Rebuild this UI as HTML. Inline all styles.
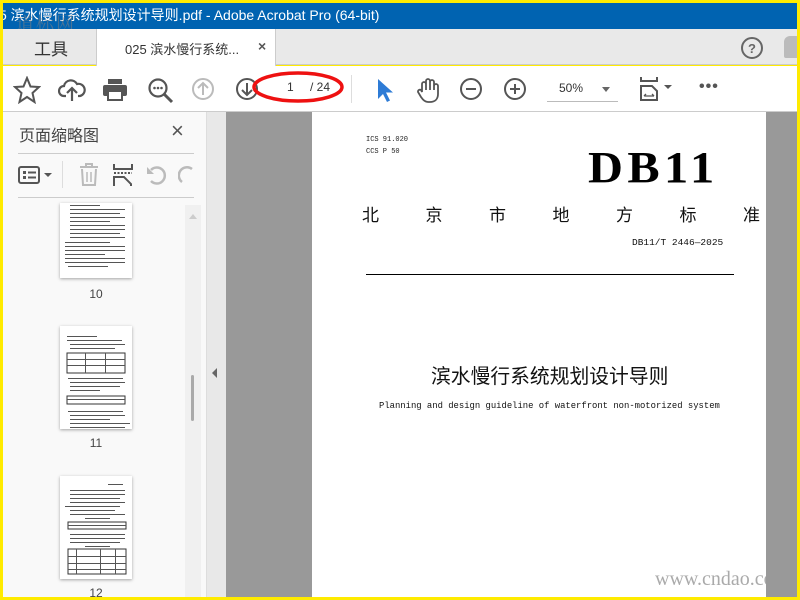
<!DOCTYPE html>
<html><head><meta charset="utf-8">
<style>
*{margin:0;padding:0;box-sizing:border-box}
body{width:800px;height:600px;overflow:hidden;background:#ffeb00;position:relative;font-family:"Liberation Sans","Noto Sans CJK SC",sans-serif}
.a{position:absolute}
.thumb{position:absolute;left:60px;width:72px;background:#fff;box-shadow:0 1px 3px rgba(0,0,0,.35)}
.lbl{position:absolute;left:60px;width:72px;text-align:center;font-size:12px;color:#444}
.ic{position:absolute}
</style></head><body>
<div class="a" style="left:3px;top:3px;width:794px;height:26px;background:#0063b1;color:#fff;font-size:14px;line-height:24px;white-space:nowrap;overflow:hidden">
<span style="margin-left:-4px">5 滨水慢行系统规划设计导则.pdf - Adobe Acrobat Pro (64-bit)</span></div>
<div class="a" style="left:16px;top:10px;font-size:18px;color:rgba(130,130,130,.55);font-family:'Liberation Serif','Noto Serif CJK SC',serif;letter-spacing:2px">道标网</div>
<div class="a" style="left:3px;top:29px;width:794px;height:36px;background:#e9e9e9;border-bottom:1px solid #ccc"></div>
<div class="a" style="left:34px;top:35px;font-size:17px;color:#333">工具</div>
<div class="a" style="left:96px;top:29px;width:180px;height:37px;background:#fff;border-left:1px solid #ccc;border-right:1px solid #ccc"></div>
<div class="a" style="left:125px;top:39px;font-size:13px;color:#333">025 滨水慢行系统...</div>
<div class="a" style="left:258px;top:38px;font-size:14px;color:#555;font-weight:bold">×</div>
<svg class="ic" style="left:740px;top:36px" width="24" height="24"><circle cx="12" cy="12" r="10" fill="none" stroke="#666" stroke-width="2"/><text x="12" y="17" font-size="13" text-anchor="middle" fill="#666" font-family="Liberation Sans" font-weight="bold">?</text></svg>
<div class="a" style="left:784px;top:36px;width:13px;height:22px;background:#bbb;border-radius:6px 0 0 2px"></div>
<div class="a" style="left:3px;top:66px;width:794px;height:46px;background:#fff;border-bottom:1px solid #ccc"></div>
<svg class="ic" style="left:13px;top:76px" width="28" height="28"><polygon points="14,2 17.5,10.5 26,11 19.5,17 21.5,26 14,21 6.5,26 8.5,17 2,11 10.5,10.5" fill="none" stroke="#555" stroke-width="2"/></svg>
<svg class="ic" style="left:58px;top:77px" width="28" height="26"><path d="M8 19H6a5 5 0 0 1 0-10a7 7 0 0 1 13-2a5 5 0 0 1 3 12h-2" fill="none" stroke="#555" stroke-width="2.2"/><path d="M14 24V12M9 16l5-5 5 5" fill="none" stroke="#555" stroke-width="2.2"/></svg>
<svg class="ic" style="left:102px;top:77px" width="26" height="26"><rect x="6" y="2" width="14" height="5" fill="#555"/><rect x="1" y="8" width="24" height="11" rx="2" fill="#555"/><rect x="6" y="14" width="14" height="9" fill="#fff" stroke="#555" stroke-width="2"/></svg>
<svg class="ic" style="left:147px;top:77px" width="28" height="28"><circle cx="11" cy="11" r="8.5" fill="none" stroke="#555" stroke-width="2.2"/><path d="M17 17l8 8" stroke="#555" stroke-width="3"/><circle cx="7.5" cy="11" r="1.3" fill="#555"/><circle cx="11" cy="11" r="1.3" fill="#555"/><circle cx="14.5" cy="11" r="1.3" fill="#555"/></svg>
<svg class="ic" style="left:191px;top:77px" width="24" height="24"><circle cx="12" cy="12" r="10" fill="none" stroke="#bbb" stroke-width="2"/><path d="M12 18V6M7 11l5-5 5 5" fill="none" stroke="#bbb" stroke-width="2"/></svg>
<svg class="ic" style="left:235px;top:77px" width="24" height="24"><circle cx="12" cy="12" r="10" fill="none" stroke="#555" stroke-width="2"/><path d="M12 6v12M7 13l5 5 5-5" fill="none" stroke="#555" stroke-width="2"/></svg>
<div class="a" style="left:287px;top:80px;font-size:12px;color:#333">1</div>
<div class="a" style="left:310px;top:80px;font-size:12px;color:#333">/ 24</div>
<svg class="ic" style="left:250px;top:68px" width="96" height="38"><ellipse cx="48" cy="19" rx="44" ry="14" fill="none" stroke="#e11" stroke-width="3.5"/></svg>
<div class="a" style="left:351px;top:75px;width:1px;height:28px;background:#ddd"></div>
<svg class="ic" style="left:374px;top:77px" width="20" height="26"><path d="M4 2v20l5-5 4 8 3-1.5-4-8h7z" fill="#2d7bd6"/></svg>
<svg class="ic" style="left:415px;top:76px" width="26" height="28"><path d="M7 16V8a2 2 0 0 1 4 0v6V5a2 2 0 0 1 4 0v9V6a2 2 0 0 1 4 0v8 -4a2 2 0 0 1 4 0v8c0 5-3 8-8 8h-2c-3 0-5-2-7-5l-3-5a2 2 0 0 1 3-2z" fill="none" stroke="#555" stroke-width="1.8"/></svg>
<svg class="ic" style="left:459px;top:77px" width="24" height="24"><circle cx="12" cy="12" r="10" fill="none" stroke="#555" stroke-width="2"/><path d="M7 12h10" stroke="#555" stroke-width="2"/></svg>
<svg class="ic" style="left:503px;top:77px" width="24" height="24"><circle cx="12" cy="12" r="10" fill="none" stroke="#555" stroke-width="2"/><path d="M7 12h10M12 7v10" stroke="#555" stroke-width="2"/></svg>
<div class="a" style="left:559px;top:81px;font-size:12px;color:#333">50%</div>
<div class="a" style="left:602px;top:87px;border:4px solid transparent;border-top:5px solid #666"></div>
<div class="a" style="left:547px;top:101px;width:71px;height:1px;background:#bbb"></div>
<svg class="ic" style="left:640px;top:76px" width="34" height="26"><path d="M1 1v4h16V1" fill="none" stroke="#555" stroke-width="2"/><path d="M1 24V10h11l5 5v9z" fill="none" stroke="#555" stroke-width="2"/><path d="M4 20h10M4 20l2-2M14 20l-2-2" stroke="#555" stroke-width="1.3" fill="none"/><path d="M24 9l4 4 4-4z" fill="#555"/></svg>
<div class="a" style="left:699px;top:78px;font-size:16px;color:#555;letter-spacing:1px;font-weight:bold">•••</div>
<div class="a" style="left:3px;top:112px;width:203px;height:485px;background:#f9f9f9"></div>
<div class="a" style="left:19px;top:122px;font-size:16px;color:#444">页面缩略图</div>
<div class="a" style="left:171px;top:118px;font-size:22px;color:#555">×</div>
<div class="a" style="left:18px;top:153px;width:176px;height:1px;background:#ccc"></div>
<svg class="ic" style="left:18px;top:164px" width="38" height="22"><rect x="1" y="3" width="20" height="16" rx="2" fill="none" stroke="#555" stroke-width="2"/><rect x="5" y="7" width="3" height="3" fill="#555"/><rect x="5" y="12" width="3" height="3" fill="#555"/><path d="M10 8.5h8M10 13.5h8" stroke="#555" stroke-width="2"/><path d="M26 9l4 4 4-4z" fill="#555"/></svg>
<div class="a" style="left:62px;top:161px;width:1px;height:27px;background:#ddd"></div>
<svg class="ic" style="left:78px;top:163px" width="22" height="24"><path d="M2 4h18M8 4V1h6v3M4 6l1 16h12l1-16" fill="none" stroke="#bbb" stroke-width="2"/><path d="M9 9v10M13 9v10" stroke="#bbb" stroke-width="1.5"/></svg>
<svg class="ic" style="left:112px;top:163px" width="22" height="24"><path d="M2 1v5h18V1" fill="none" stroke="#555" stroke-width="2"/><path d="M2 10h18" stroke="#555" stroke-width="2" stroke-dasharray="2 1.5"/><path d="M2 23V14h10l7 7v2" fill="none" stroke="#555" stroke-width="2"/></svg>
<svg class="ic" style="left:145px;top:164px" width="24" height="22"><path d="M6 6a8 8 0 1 1 0 11" fill="none" stroke="#bbb" stroke-width="2.5"/><path d="M2 3v7h7" fill="#bbb"/></svg>
<svg class="ic" style="left:178px;top:164px" width="18" height="22"><path d="M14 5a8 8 0 0 0-10 13" fill="none" stroke="#bbb" stroke-width="2.5"/></svg>
<div class="a" style="left:18px;top:197px;width:176px;height:1px;background:#ccc"></div>
<div class="a" style="left:185px;top:205px;width:16px;height:392px;background:#f0f0f0"></div>
<div class="a" style="left:189px;top:210px;border:4px solid transparent;border-bottom:5px solid #ccc"></div>
<div class="a" style="left:191px;top:375px;width:3px;height:46px;background:#aaa;border-radius:2px"></div>
<div class="thumb" style="top:203px;height:75px"></div>
<div class="lbl" style="top:287px">10</div>
<div class="thumb" style="top:326px;height:103px"></div>
<div class="lbl" style="top:436px">11</div>
<div class="thumb" style="top:476px;height:103px"></div>
<div class="lbl" style="top:586px">12</div>
<svg class="a" style="left:60px;top:203px" width="72" height="380">
<g fill="#555">
<rect x="10" y="2" width="30" height="1"/><rect x="10" y="6" width="55" height="1"/><rect x="10" y="10" width="50" height="1"/><rect x="10" y="14" width="55" height="1"/><rect x="10" y="18" width="40" height="1"/><rect x="10" y="22" width="55" height="1"/><rect x="10" y="26" width="55" height="1"/><rect x="10" y="30" width="50" height="1"/><rect x="10" y="34" width="55" height="1"/><rect x="5" y="39" width="45" height="1"/><rect x="5" y="43" width="60" height="1"/><rect x="5" y="47" width="60" height="1"/><rect x="5" y="51" width="40" height="1"/><rect x="5" y="55" width="60" height="1"/><rect x="5" y="59" width="60" height="1"/><rect x="8" y="63" width="40" height="1"/>
<rect x="7" y="133" width="30" height="1"/><rect x="7" y="137" width="55" height="1"/><rect x="10" y="141" width="55" height="1"/><rect x="10" y="145" width="45" height="1"/>
<rect x="7" y="150" width="58" height="20" fill="none" stroke="#333" stroke-width="1"/><rect x="7" y="156" width="58" height="1"/><rect x="7" y="162" width="58" height="1"/><rect x="25" y="150" width="1" height="20"/><rect x="45" y="150" width="1" height="20"/>
<rect x="8" y="175" width="55" height="1"/><rect x="10" y="179" width="55" height="1"/><rect x="10" y="183" width="50" height="1"/><rect x="10" y="187" width="30" height="1"/>
<rect x="7" y="193" width="58" height="8" fill="none" stroke="#333" stroke-width="1"/><rect x="7" y="196" width="58" height="1"/>
<rect x="8" y="208" width="55" height="1"/><rect x="10" y="212" width="55" height="1"/><rect x="10" y="216" width="40" height="1"/><rect x="10" y="220" width="60" height="1"/><rect x="10" y="224" width="55" height="1"/>
<rect x="48" y="281" width="15" height="1"/><rect x="10" y="287" width="55" height="1"/><rect x="10" y="291" width="55" height="1"/><rect x="10" y="295" width="50" height="1"/><rect x="10" y="299" width="55" height="1"/><rect x="5" y="303" width="55" height="1"/><rect x="10" y="307" width="45" height="1"/><rect x="10" y="311" width="55" height="1"/><rect x="25" y="315" width="25" height="1"/>
<rect x="8" y="319" width="58" height="7" fill="none" stroke="#333" stroke-width="1"/><rect x="8" y="322" width="58" height="1"/>
<rect x="10" y="331" width="55" height="1"/><rect x="10" y="335" width="55" height="1"/><rect x="10" y="339" width="50" height="1"/><rect x="25" y="343" width="25" height="1"/>
<rect x="8" y="346" width="58" height="25" fill="none" stroke="#333" stroke-width="1"/><rect x="8" y="353" width="58" height="1"/><rect x="8" y="360" width="58" height="1"/><rect x="8" y="366" width="58" height="1"/><rect x="16" y="346" width="1" height="25"/><rect x="40" y="346" width="1" height="25"/><rect x="55" y="346" width="1" height="25"/>
</g></svg>
<div class="a" style="left:206px;top:112px;width:20px;height:485px;background:#e8e8e8;border-left:1px solid #ddd"></div>
<div class="a" style="left:212px;top:368px;border:5px solid transparent;border-right:5px solid #666;border-left:0"></div>
<div class="a" style="left:226px;top:112px;width:571px;height:485px;background:#999"></div>
<div class="a" style="left:312px;top:112px;width:454px;height:485px;background:#fff"></div>
<div class="a" style="left:366px;top:136px;font-family:'Liberation Mono',monospace;font-size:7px;color:#222">ICS 91.020</div>
<div class="a" style="left:366px;top:148px;font-family:'Liberation Mono',monospace;font-size:7px;color:#222">CCS P 50</div>
<div class="a" style="left:588px;top:142px;font-family:'Liberation Serif',serif;font-weight:bold;font-size:44px;color:#000;letter-spacing:4px;transform:scaleX(1.1);transform-origin:left">DB11</div>
<div class="a" style="left:362px;top:201px;width:398px;display:flex;justify-content:space-between;font-size:17px;color:#111"><span>北</span><span>京</span><span>市</span><span>地</span><span>方</span><span>标</span><span>准</span></div>
<div class="a" style="left:632px;top:237px;font-family:'Liberation Mono',monospace;font-size:9.5px;color:#111">DB11/T 2446—2025</div>
<div class="a" style="left:366px;top:274px;width:368px;height:1px;background:#000"></div>
<div class="a" style="left:431px;top:360px;font-size:19.8px;color:#111;white-space:nowrap">滨水慢行系统规划设计导则</div>
<div class="a" style="left:379px;top:401px;font-family:'Liberation Mono',monospace;font-size:8.9px;color:#111;white-space:nowrap">Planning and design guideline of waterfront non-motorized system</div>
<div class="a" style="left:655px;top:568px;font-family:'Liberation Serif',serif;font-size:20px;color:#aaa;white-space:nowrap;width:111px;overflow:hidden">www.cndao.com</div>
</body></html>
